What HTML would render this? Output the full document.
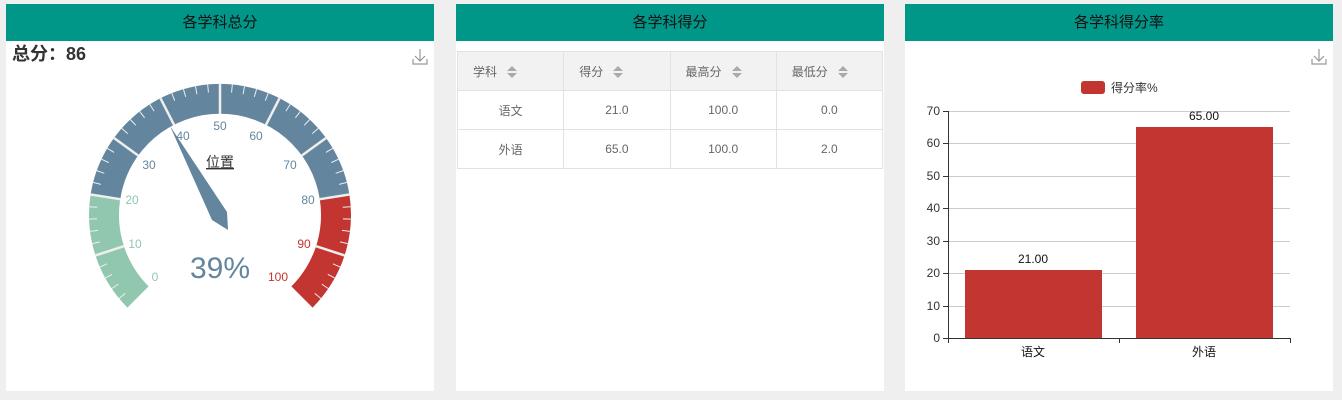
<!DOCTYPE html>
<html><head><meta charset="utf-8"><style>
*{margin:0;padding:0;box-sizing:border-box}
body{width:1342px;height:400px;background:#efefef;font-family:"Liberation Sans","Noto Sans CJK SC",sans-serif;position:relative;overflow:hidden}
.p{position:absolute;top:4px;width:428px;height:387px;background:#fff}
.h{height:37px;background:#009688;color:#111;font-size:15px;text-align:center;line-height:37px}
svg{position:absolute;left:0;top:0}
table{position:absolute;left:1px;top:47px;width:426px;border-collapse:collapse;font-size:12px;color:#666}
td,th{border:1px solid #e2e2e2;height:39px;font-weight:normal;width:106px}
th{background:#f2f2f2;text-align:left;padding-left:15px}
td{text-align:center}
.s{display:inline-block;vertical-align:middle;margin-left:10px;width:10px;height:12px;position:relative}
.s:before{content:"";position:absolute;left:0;top:0;border:5px solid transparent;border-bottom:5px solid #aaa;border-top:0}
.s:after{content:"";position:absolute;left:0;top:7px;border:5px solid transparent;border-top:5px solid #aaa;border-bottom:0}
</style></head><body>
<div class="p" style="left:6px"><div class="h">各学科总分</div>
<svg width="428" height="387" viewBox="6 4 428 387">
<text x="12" y="60" font-size="18" font-weight="bold" fill="#333">总分：86</text>
<g stroke="#999" fill="none" stroke-width="1.2"><path d="M420 49v12M415 56l5 5 5-5M413 59v5h14v-5"/></g>
<path d="M127.4,307.6 A131,131 0 0 1 90.6,194.5 L120.2,199.2 A101,101 0 0 0 148.6,286.4 Z" fill="#91c7ae"/>
<path d="M90.6,194.5 A131,131 0 0 1 349.4,194.5 L319.8,199.2 A101,101 0 0 0 120.2,199.2 Z" fill="#63869e"/>
<path d="M349.4,194.5 A131,131 0 0 1 312.6,307.6 L291.4,286.4 A101,101 0 0 0 319.8,199.2 Z" fill="#c23531"/>
<g transform="translate(220,215)" stroke="#eee">
<g stroke-width="2.5">
<line x1="101" x2="131" transform="rotate(162)"/><line x1="101" x2="131" transform="rotate(189)"/><line x1="101" x2="131" transform="rotate(216)"/><line x1="101" x2="131" transform="rotate(243)"/><line x1="101" x2="131" transform="rotate(270)"/><line x1="101" x2="131" transform="rotate(297)"/><line x1="101" x2="131" transform="rotate(324)"/><line x1="101" x2="131" transform="rotate(351)"/><line x1="101" x2="131" transform="rotate(378)"/>
</g>
<g stroke-width="1">
<line x1="123" x2="131" transform="rotate(140.4)"/><line x1="123" x2="131" transform="rotate(145.8)"/><line x1="123" x2="131" transform="rotate(151.2)"/><line x1="123" x2="131" transform="rotate(156.6)"/>
<line x1="123" x2="131" transform="rotate(167.4)"/><line x1="123" x2="131" transform="rotate(172.8)"/><line x1="123" x2="131" transform="rotate(178.2)"/><line x1="123" x2="131" transform="rotate(183.6)"/>
<line x1="123" x2="131" transform="rotate(194.4)"/><line x1="123" x2="131" transform="rotate(199.8)"/><line x1="123" x2="131" transform="rotate(205.2)"/><line x1="123" x2="131" transform="rotate(210.6)"/>
<line x1="123" x2="131" transform="rotate(221.4)"/><line x1="123" x2="131" transform="rotate(226.8)"/><line x1="123" x2="131" transform="rotate(232.2)"/><line x1="123" x2="131" transform="rotate(237.6)"/>
<line x1="123" x2="131" transform="rotate(248.4)"/><line x1="123" x2="131" transform="rotate(253.8)"/><line x1="123" x2="131" transform="rotate(259.2)"/><line x1="123" x2="131" transform="rotate(264.6)"/>
<line x1="123" x2="131" transform="rotate(275.4)"/><line x1="123" x2="131" transform="rotate(280.8)"/><line x1="123" x2="131" transform="rotate(286.2)"/><line x1="123" x2="131" transform="rotate(291.6)"/>
<line x1="123" x2="131" transform="rotate(302.4)"/><line x1="123" x2="131" transform="rotate(307.8)"/><line x1="123" x2="131" transform="rotate(313.2)"/><line x1="123" x2="131" transform="rotate(318.6)"/>
<line x1="123" x2="131" transform="rotate(329.4)"/><line x1="123" x2="131" transform="rotate(334.8)"/><line x1="123" x2="131" transform="rotate(340.2)"/><line x1="123" x2="131" transform="rotate(345.6)"/>
<line x1="123" x2="131" transform="rotate(356.4)"/><line x1="123" x2="131" transform="rotate(361.8)"/><line x1="123" x2="131" transform="rotate(367.2)"/><line x1="123" x2="131" transform="rotate(372.6)"/>
<line x1="123" x2="131" transform="rotate(383.4)"/><line x1="123" x2="131" transform="rotate(388.8)"/><line x1="123" x2="131" transform="rotate(394.2)"/><line x1="123" x2="131" transform="rotate(399.6)"/>
</g></g>
<g font-size="12" text-anchor="middle" dominant-baseline="central">
<text x="155" y="277" fill="#91c7ae">0</text><text x="135" y="244" fill="#91c7ae">10</text><text x="132" y="200" fill="#91c7ae">20</text>
<text x="149" y="165" fill="#63869e">30</text><text x="183" y="136" fill="#63869e">40</text><text x="220" y="126" fill="#63869e">50</text><text x="256" y="136" fill="#63869e">60</text><text x="290" y="165" fill="#63869e">70</text><text x="308" y="200" fill="#63869e">80</text>
<text x="304" y="244" fill="#c23531">90</text><text x="278" y="277" fill="#c23531">100</text>
</g>
<polygon points="170,126 227,212 228,230 212,220" fill="#63869e"/>
<text x="220" y="167" font-size="14" text-anchor="middle" fill="#333" text-decoration="underline">位置</text>
<text x="220" y="278" font-size="30" text-anchor="middle" fill="#63869e">39%</text>
</svg></div>

<div class="p" style="left:456px"><div class="h">各学科得分</div>
<table><tr><th>学科<span class="s"></span></th><th>得分<span class="s"></span></th><th>最高分<span class="s"></span></th><th>最低分<span class="s"></span></th></tr>
<tr><td>语文</td><td>21.0</td><td>100.0</td><td>0.0</td></tr>
<tr><td>外语</td><td>65.0</td><td>100.0</td><td>2.0</td></tr></table>
</div>

<div class="p" style="left:905px"><div class="h">各学科得分率</div>
<svg width="428" height="387" viewBox="905 4 428 387">
<g stroke="#999" fill="none" stroke-width="1.2"><path d="M1319 49v12M1314 56l5 5 5-5M1312 59v5h14v-5"/></g>
<rect x="1081" y="81" width="24" height="13" rx="3" fill="#c23531"/>
<text x="1111" y="92" font-size="12" fill="#333">得分率%</text>
<g stroke="#ccc"><line x1="948" x2="1290" y1="111.5" y2="111.5"/><line x1="948" x2="1290" y1="143.5" y2="143.5"/><line x1="948" x2="1290" y1="176.5" y2="176.5"/><line x1="948" x2="1290" y1="208.5" y2="208.5"/><line x1="948" x2="1290" y1="241.5" y2="241.5"/><line x1="948" x2="1290" y1="273.5" y2="273.5"/><line x1="948" x2="1290" y1="306.5" y2="306.5"/></g>
<rect x="965" y="270" width="137" height="68" fill="#c23531"/>
<rect x="1136" y="127" width="137" height="211" fill="#c23531"/>
<g stroke="#333"><line x1="948.5" x2="948.5" y1="111" y2="343"/><line x1="948" x2="1291" y1="338.5" y2="338.5"/><line x1="1119.5" x2="1119.5" y1="338" y2="343"/><line x1="1290.5" x2="1290.5" y1="338" y2="343"/>
<line x1="943" x2="948" y1="111.5" y2="111.5"/><line x1="943" x2="948" y1="143.5" y2="143.5"/><line x1="943" x2="948" y1="176.5" y2="176.5"/><line x1="943" x2="948" y1="208.5" y2="208.5"/><line x1="943" x2="948" y1="241.5" y2="241.5"/><line x1="943" x2="948" y1="273.5" y2="273.5"/><line x1="943" x2="948" y1="306.5" y2="306.5"/><line x1="943" x2="948" y1="338.5" y2="338.5"/></g>
<g font-size="12" fill="#333" text-anchor="end" dominant-baseline="central"><text x="940" y="111">70</text><text x="940" y="143">60</text><text x="940" y="176">50</text><text x="940" y="208">40</text><text x="940" y="241">30</text><text x="940" y="273">20</text><text x="940" y="306">10</text><text x="940" y="338">0</text></g>
<g font-size="12" fill="#111" text-anchor="middle"><text x="1033" y="263">21.00</text><text x="1204" y="120">65.00</text><text x="1033" y="356">语文</text><text x="1204" y="356">外语</text></g>
</svg></div>
</body></html>
